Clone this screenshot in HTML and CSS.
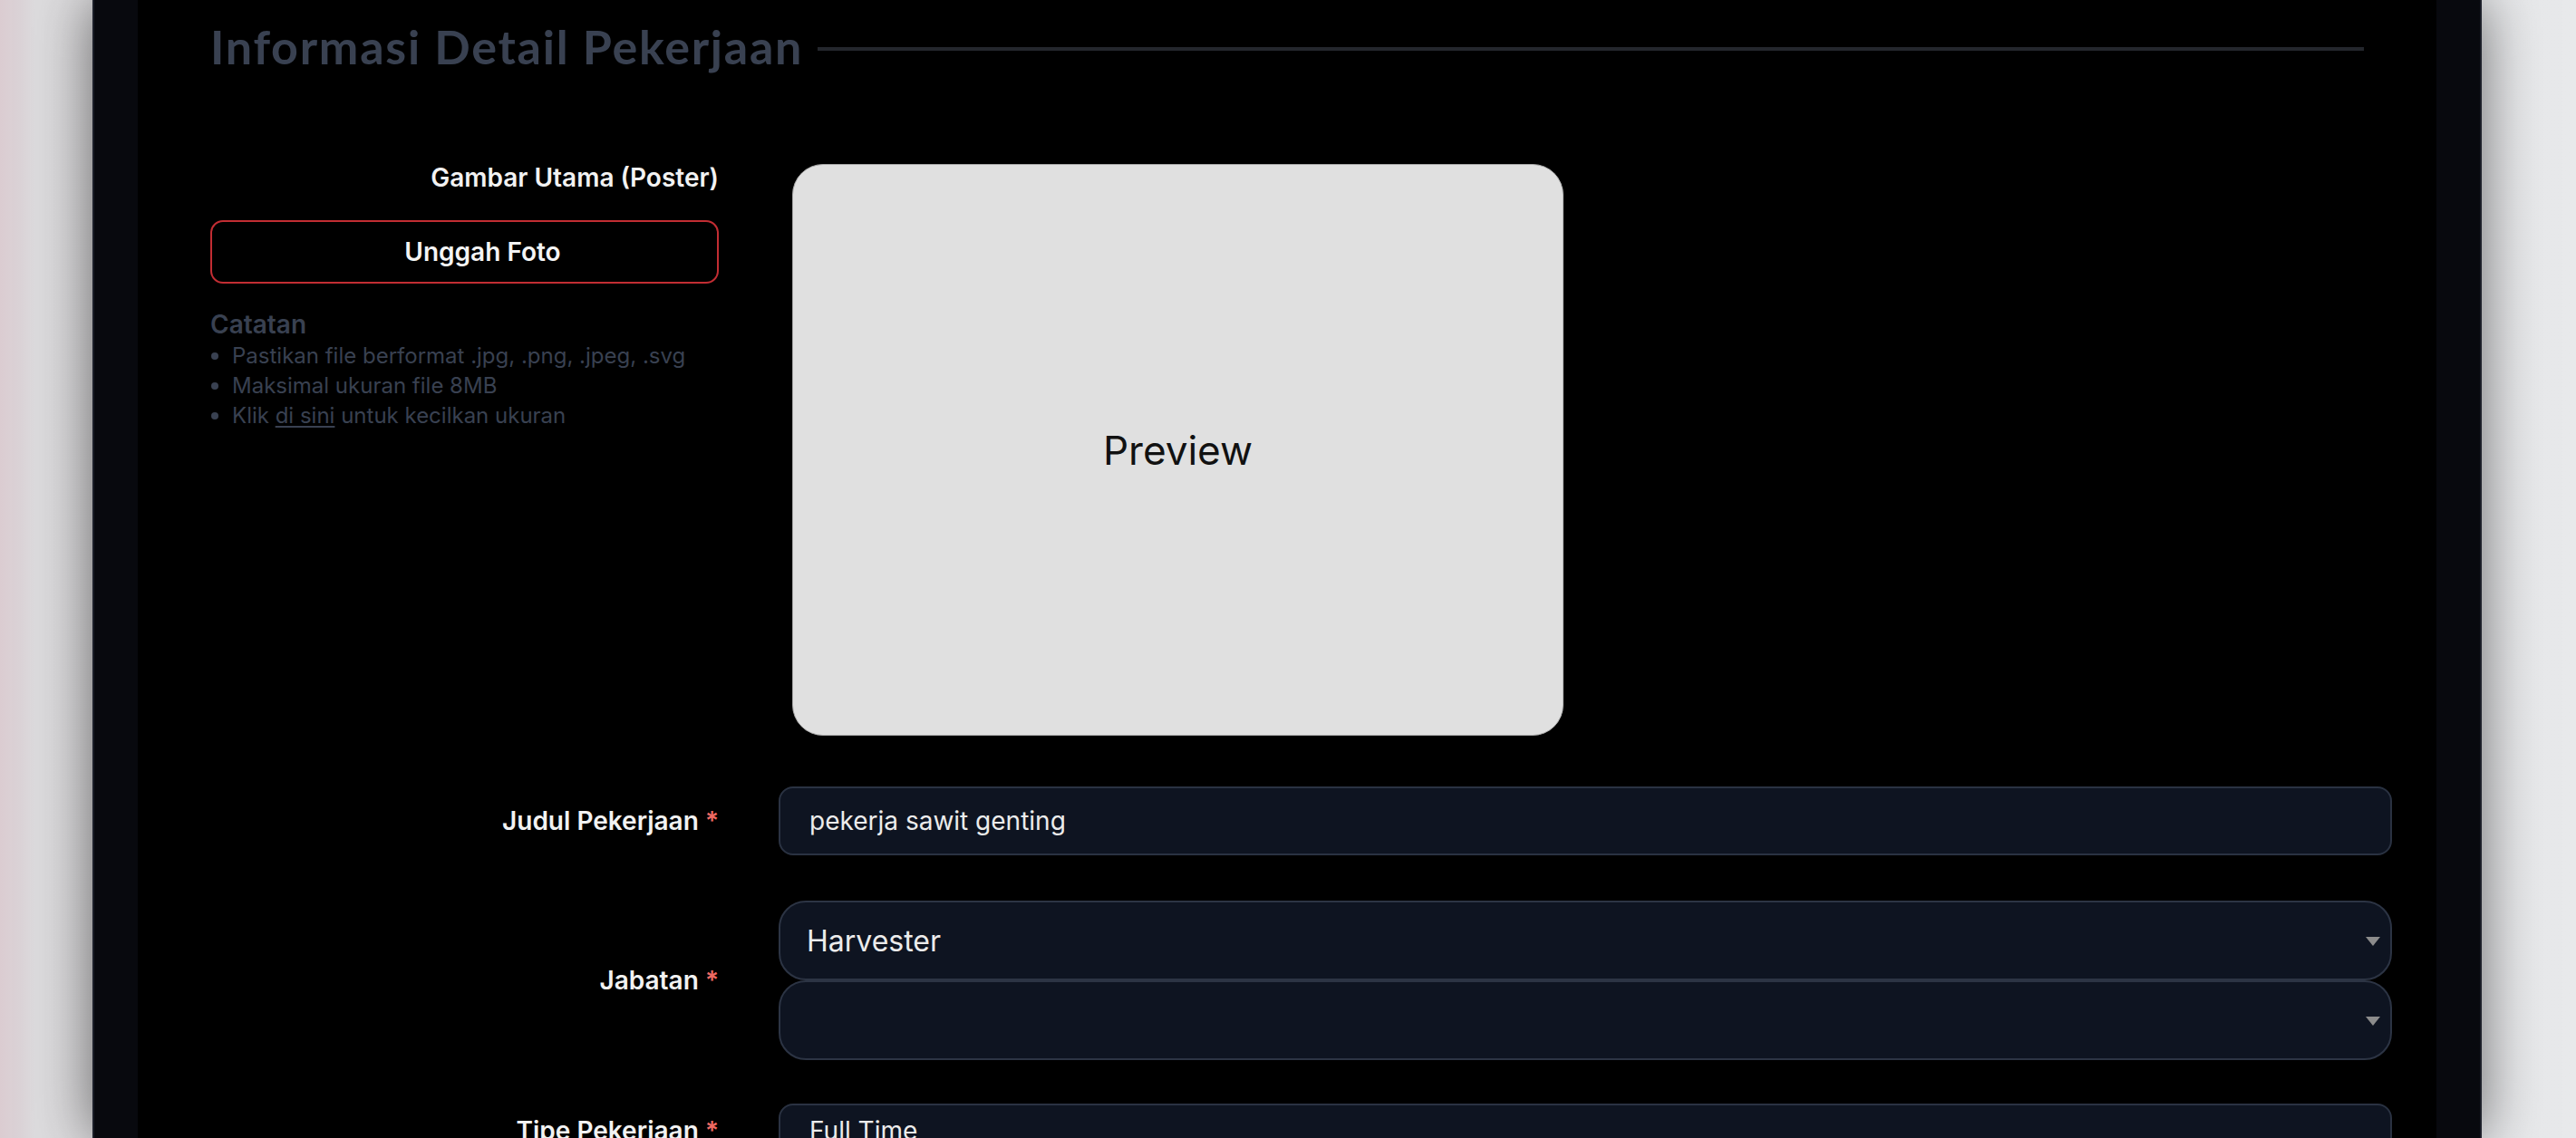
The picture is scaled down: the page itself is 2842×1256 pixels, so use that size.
FILE: index.html
```html
<!DOCTYPE html>
<html lang="id">
<head>
<meta charset="utf-8">
<title>Informasi Detail Pekerjaan</title>
<link rel="stylesheet" href="styles.css">
</head>
<body>
<div class="shell">
  <main class="card">
    <div class="section-head">
      <h2 class="section-title">Informasi Detail Pekerjaan</h2>
      <div class="section-rule"></div>
    </div>

    <form class="job-form">
      <div class="row row-poster">
        <div class="poster-side">
          <div class="label">Gambar Utama (Poster)</div>
          <button type="button" class="upload-btn">Unggah Foto</button>
          <div class="notes">
            <div class="notes-title">Catatan</div>
            <ul class="notes-list">
              <li>Pastikan file berformat .jpg, .png, .jpeg, .svg</li>
              <li>Maksimal ukuran file 8MB</li>
              <li>Klik <a href="#" class="notes-link">di sini</a> untuk kecilkan ukuran</li>
            </ul>
          </div>
        </div>
        <div class="preview">Preview</div>
      </div>

      <div class="row row-title">
        <label class="label" for="judul">Judul Pekerjaan <span class="req">*</span></label>
        <input id="judul" class="text-input" type="text" value="pekerja sawit genting">
      </div>

      <div class="row row-position">
        <div class="label">Jabatan <span class="req">*</span></div>
        <div class="select-stack">
          <div class="select-wrap">
            <select class="select select-main">
              <option>Harvester</option>
            </select>
          </div>
          <div class="select-wrap">
            <select class="select">
              <option></option>
            </select>
          </div>
        </div>
      </div>

      <div class="row row-type">
        <label class="label" for="tipe">Tipe Pekerjaan <span class="req">*</span></label>
        <input id="tipe" class="text-input text-input-type" type="text" value="Full Time">
      </div>
    </form>
  </main>
</div>
</body>
</html>
```

FILE: styles.css
```css
* {
  box-sizing: border-box;
}

html,
body {
  margin: 0;
  height: 1256px;
  overflow: hidden;
}

body {
  background: linear-gradient(90deg, #dbccd1 0, #dbd3d7 22px, #dddcde 40px, #e4e5e7 50%, #e8e9eb 100%);
  font-family: Inter, "Noto Sans", sans-serif;
}

/* outer dark frame with its drop shadow */
.shell {
  margin: 0 104px 0 102px;
  height: 1256px;
  padding: 0 48px;
  background: #08090e;
  border-left: 2px solid #1b1e28;
  border-right: 2px solid #1b1e28;
  box-shadow: 0 0 60px rgba(0, 0, 0, 0.55);
}

.card {
  height: 100%;
  background: #000;
  padding: 25px 49px 0 80px;
}

/* section heading with trailing rule */
.section-head {
  display: flex;
  align-items: center;
  gap: 16px;
  margin-right: 31px;
}

.section-title {
  margin: 0;
  font-family: Lato, "Open Sans", sans-serif;
  font-weight: 700;
  font-size: 52px;
  line-height: 52px;
  letter-spacing: 1.75px;
  color: #394151;
  white-space: nowrap;
}

.section-rule {
  flex: 1;
  height: 4px;
  margin-top: 6px;
  background: #24272d;
}

/* form rows */
.row {
  display: grid;
  grid-template-columns: 561px 1fr;
  column-gap: 66px;
  align-items: center;
}

.row-poster {
  margin-top: 104px;
  align-items: start;
}

.row-title {
  margin-top: 56px;
}

.row-position {
  margin-top: 50px;
}

.row-type {
  margin-top: 48px;
  align-items: start;
}

.label {
  display: block;
  text-align: right;
  font-size: 28px;
  font-weight: 600;
  line-height: 30px;
  color: #f2f2f2;
}

.req {
  color: #ee6a63;
}

.row-type .label {
  padding-top: 15px;
}

/* poster upload column */
.poster-side {
  display: flex;
  flex-direction: column;
}

.upload-btn {
  margin-top: 32px;
  height: 70px;
  width: 100%;
  padding: 0 0 0 40px;
  background: transparent;
  border: 2px solid #c22d33;
  border-radius: 14px;
  color: #f4f4f4;
  font-family: Inter, "Noto Sans", sans-serif;
  font-size: 28px;
  font-weight: 600;
  cursor: pointer;
}

.notes {
  margin-top: 27px;
  color: #394151;
}

.notes-title {
  font-size: 28px;
  font-weight: 600;
  line-height: 36px;
}

.notes-list {
  list-style: none;
  margin: 0;
  padding: 0;
}

.notes-list li {
  position: relative;
  padding-left: 24px;
  font-size: 24px;
  line-height: 33px;
}

.notes-list li::before {
  content: "";
  position: absolute;
  left: 1px;
  top: 13px;
  width: 8px;
  height: 8px;
  border-radius: 50%;
  background: currentColor;
}

.notes-link {
  color: inherit;
  text-decoration: underline;
  text-underline-offset: 3px;
}

/* image preview placeholder */
.preview {
  width: 851px;
  height: 631px;
  margin-left: 15px;
  display: flex;
  align-items: center;
  justify-content: center;
  background: #e0e0e0;
  border: 1px solid #a9a9a9;
  border-radius: 34px;
  font-size: 44px;
  color: #111;
}

/* text inputs */
.text-input {
  display: block;
  width: 100%;
  height: 76px;
  padding: 0 32px;
  background: #0e1421;
  border: 2px solid #2a3242;
  border-radius: 16px;
  color: #ececec;
  font-family: Inter, "Noto Sans", sans-serif;
  font-size: 28px;
  outline: none;
}

.text-input-type {
  padding-bottom: 16px;
}

/* stacked selects */
.select-stack {
  display: flex;
  flex-direction: column;
}

.select-wrap {
  position: relative;
}

.select-wrap::after {
  content: "";
  position: absolute;
  right: 13px;
  top: 50%;
  margin-top: -4px;
  border-left: 8px solid transparent;
  border-right: 8px solid transparent;
  border-top: 10px solid #8c8c8c;
  pointer-events: none;
}

.select {
  display: block;
  width: 100%;
  height: 88px;
  padding: 0 40px 0 29px;
  appearance: none;
  -webkit-appearance: none;
  background: #0e1421;
  border: 2px solid #2c3444;
  border-radius: 30px;
  color: #ececec;
  font-family: Inter, "Noto Sans", sans-serif;
  font-size: 32px;
  outline: none;
}
```
